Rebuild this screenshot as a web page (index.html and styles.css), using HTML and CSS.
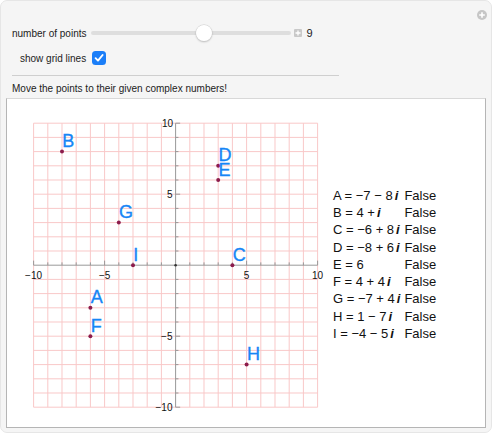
FILE: index.html
```html
<!DOCTYPE html>
<html>
<head>
<meta charset="utf-8">
<link rel="stylesheet" href="styles.css">
</head>
<body>
<div class="app">
  <span class="corner-btn"><svg width="10" height="10" viewBox="0 0 10 10"><circle cx="5" cy="5" r="5" fill="#c6c6c6"/><path d="M5 2.2V7.8M2.2 5H7.8" stroke="#fff" stroke-width="1.6"/></svg></span>
  <div class="controls">
    <div class="row row-slider">
      <span class="label-points">number of points</span>
      <div class="slider"><span class="thumb" style="left:56.5%"></span></div>
      <span class="plus-btn"><svg width="8" height="8" viewBox="0 0 8 8"><path d="M4 1.5V6.5M1.5 4H6.5" stroke="#fff" stroke-width="1.3"/></svg></span>
      <span class="value">9</span>
    </div>
    <div class="row row-grid">
      <span>show grid lines</span>
      <span class="checkbox"><svg width="10" height="10" viewBox="0 0 10 10"><path d="M1.6 5.2L4 7.6L8.6 2" fill="none" stroke="#fff" stroke-width="1.9" stroke-linecap="round" stroke-linejoin="round"/></svg></span>
    </div>
    <div class="divider"></div>
    <div class="instructions">Move the points to their given complex numbers!</div>
  </div>
  <div class="panel">
    <svg class="plot" width="322" height="328" viewBox="0 0 322 328">
      <g transform="translate(168.6 166.2) scale(14.2 -14.2)" fill="none">
        <path class="grid" d="M-10-10V10M-9-10V10M-8-10V10M-7-10V10M-6-10V10M-5-10V10M-4-10V10M-3-10V10M-2-10V10M-1-10V10M1-10V10M2-10V10M3-10V10M4-10V10M5-10V10M6-10V10M7-10V10M8-10V10M9-10V10M10-10V10M-10-10H10M-10-9H10M-10-8H10M-10-7H10M-10-6H10M-10-5H10M-10-4H10M-10-3H10M-10-2H10M-10-1H10M-10 1H10M-10 2H10M-10 3H10M-10 4H10M-10 5H10M-10 6H10M-10 7H10M-10 8H10M-10 9H10M-10 10H10"/>
        <path class="axis" d="M-10 0H10M0-10V10"/>
        <path class="axis" d="M-9 0V.2M-8 0V.2M-7 0V.2M-6 0V.2M-4 0V.2M-3 0V.2M-2 0V.2M-1 0V.2M1 0V.2M2 0V.2M3 0V.2M4 0V.2M6 0V.2M7 0V.2M8 0V.2M9 0V.2M-10 0V.32M-5 0V.32M5 0V.32M10 0V.32M0-9H.2M0-8H.2M0-7H.2M0-6H.2M0-4H.2M0-3H.2M0-2H.2M0-1H.2M0 1H.2M0 2H.2M0 3H.2M0 4H.2M0 6H.2M0 7H.2M0 8H.2M0 9H.2M0-10H.32M0-5H.32M0 5H.32M0 10H.32"/>
      </g>
      <circle cx="168.6" cy="166.2" r="1.3" fill="#333"/>
      <g class="ticklabels">
        <text x="166" y="27.7" text-anchor="end">10</text>
        <text x="165.5" y="98.9" text-anchor="end">5</text>
        <text x="165.5" y="241.1" text-anchor="end">−5</text>
        <text x="165.5" y="311.7" text-anchor="end">−10</text>
        <text x="26.6" y="179.5" text-anchor="middle">−10</text>
        <text x="97.6" y="179.5" text-anchor="middle">−5</text>
        <text x="239.6" y="179.5" text-anchor="middle">5</text>
        <text x="310.6" y="179.5" text-anchor="middle">10</text>
      </g>
      <g class="pts">
        <circle cx="83.4" cy="208.8" r="2"/>
        <circle cx="55" cy="52.6" r="2"/>
        <circle cx="225.4" cy="166.2" r="2"/>
        <circle cx="211.2" cy="66.8" r="2"/>
        <circle cx="211.2" cy="81" r="2"/>
        <circle cx="83.4" cy="237.2" r="2"/>
        <circle cx="111.8" cy="123.6" r="2"/>
        <circle cx="239.6" cy="265.6" r="2"/>
        <circle cx="126" cy="166.2" r="2"/>
      </g>
      <g class="ptlabels">
        <text x="83.7" y="204.3">A</text>
        <text x="55.3" y="48.1">B</text>
        <text x="225.7" y="161.7">C</text>
        <text x="211.5" y="62.3">D</text>
        <text x="211.5" y="76.5">E</text>
        <text x="83.7" y="232.7">F</text>
        <text x="112.1" y="119.1">G</text>
        <text x="239.9" y="261.1">H</text>
        <text x="126.3" y="161.7">I</text>
      </g>
    </svg>
    <div class="results">
      <span>A = −7 − 8<i class="im">i</i></span><span>False</span>
      <span>B = 4 +<i class="im">i</i></span><span>False</span>
      <span>C = −6 + 8<i class="im">i</i></span><span>False</span>
      <span>D = −8 + 6<i class="im">i</i></span><span>False</span>
      <span>E = 6</span><span>False</span>
      <span>F = 4 + 4<i class="im">i</i></span><span>False</span>
      <span>G = −7 + 4<i class="im">i</i></span><span>False</span>
      <span>H = 1 − 7<i class="im">i</i></span><span>False</span>
      <span>I = −4 − 5<i class="im">i</i></span><span>False</span>
    </div>
  </div>
</div>
</body>
</html>
```
FILE: styles.css
```css
* { box-sizing: border-box; }
body {
  margin: 0;
  background: #fff;
  font-family: "Liberation Sans", Arial, sans-serif;
}
.app {
  position: relative;
  width: 492px;
  background: #f5f5f5;
  border: 1px solid #e6e6e6;
  border-radius: 7px;
  padding: 24px 5px 4px 5px;
}
.corner-btn {
  position: absolute;
  top: 8.5px;
  right: 4px;
  width: 10px;
  height: 10px;
  display: block;
}
.corner-btn svg { display: block; }
.controls {
  padding-left: 6px;
  font-size: 10px;
  color: #222;
}
.row {
  display: flex;
  align-items: center;
}
.row-slider { height: 16px; }
.label-points { margin-right: 4px; }
.slider {
  position: relative;
  width: 200px;
  height: 4px;
  background: #dedede;
  border-radius: 2px;
}
.thumb {
  position: absolute;
  top: 50%;
  width: 16px;
  height: 16px;
  margin: -8px 0 0 -8px;
  border-radius: 50%;
  background: #fff;
  box-shadow: 0 0 0 0.5px #cfcfcf, 0 1px 2px rgba(0, 0, 0, 0.25);
}
.plus-btn {
  width: 8px;
  height: 8px;
  margin-left: 3px;
  background: #c9c9c9;
  border-radius: 1px;
}
.plus-btn svg { display: block; }
.value {
  margin-left: 5px;
  font-size: 11px;
}
.row-grid {
  height: 14px;
  margin-top: 10px;
  padding-left: 8px;
}
.checkbox {
  width: 14px;
  height: 14px;
  margin-left: 6px;
  border-radius: 3.5px;
  background: #1b7ef8;
  display: flex;
  align-items: center;
  justify-content: center;
}
.checkbox svg { display: block; }
.divider {
  width: 327px;
  height: 1px;
  background: #cfcfcf;
  margin-top: 10px;
}
.instructions {
  margin-top: 7px;
  line-height: 12px;
}
.panel {
  margin-top: 3px;
  height: 330px;
  background: #fff;
  border: 1px solid #b5b5b5;
  border-top-color: #d8d8d8;
  display: flex;
  align-items: center;
}
.plot {
  flex: none;
  display: block;
}
.grid {
  stroke: #f9c8c8;
  stroke-width: 0.0704;
}
.axis {
  stroke: #999;
  stroke-width: 0.0704;
}
.ticklabels text {
  font-family: "Liberation Sans", Arial, sans-serif;
  font-size: 10px;
  fill: #111;
}
.pts circle { fill: #8c1c4c; }
.ptlabels text {
  font-family: "Liberation Sans", Arial, sans-serif;
  font-size: 18px;
  fill: #1686f6;
  stroke: #1686f6;
  stroke-width: 0.35px;
}
.results {
  margin-left: 4px;
  padding-top: 3px;
  display: grid;
  grid-template-columns: max-content max-content;
  column-gap: 4px;
  font-size: 13px;
  line-height: 17.3px;
  color: #111;
}
.im {
  font-weight: bold;
  font-style: italic;
  margin-left: 2px;
}
```
